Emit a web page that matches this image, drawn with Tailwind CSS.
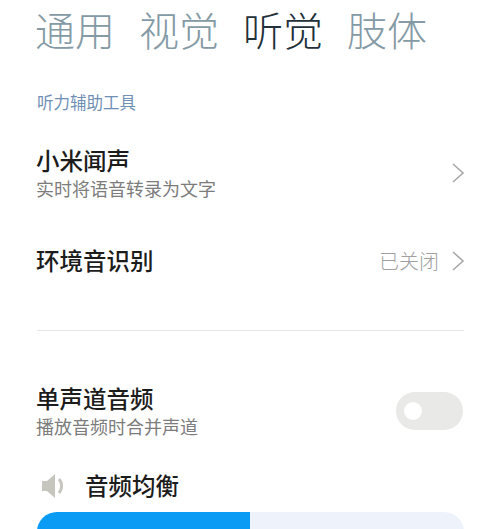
<!DOCTYPE html>
<html lang="zh-CN">
<head>
    <meta charset="UTF-8">
    <meta name="viewport" content="width=device-width, initial-scale=1.0">
    <title>听觉</title>
    <script src="https://cdn.jsdelivr.net/npm/@tailwindcss/browser@4"></script>
</head>
<body class="bg-white h-[529px] overflow-hidden font-['Noto_Sans_CJK_SC','Noto_Sans',sans-serif]">
    <div class="px-[36px] h-full flex flex-col">
        <!-- tabs -->
        <div class="flex gap-[24px] ml-[-1px] pt-[3px] h-[52px] text-[40px] leading-[52px] font-light text-[#849aa5]">
            <span>通用</span>
            <span>视觉</span>
            <span class="text-[#22303a]">听觉</span>
            <span>肢体</span>
        </div>

        <div class="mt-[40px] ml-[1px] text-[16.5px] leading-[20px] text-[#6f8fb5]">听力辅助工具</div>

        <!-- 小米闻声 -->
        <div class="mt-[33px] flex items-center justify-between">
            <div>
                <div class="text-[23.5px] leading-[30px] font-medium text-[#1c1c1c]">小米闻声</div>
                <div class="text-[18px] leading-[26px] text-[#7c7c7c]">实时将语音转录为文字</div>
            </div>
            <svg class="w-[14px] h-[22px] mr-[-1px]" viewBox="0 0 14 22" fill="none" stroke="#a8a8a8" stroke-width="1.6"><path d="M2 2l10 9-10 9"/></svg>
        </div>

        <!-- 环境音识别 -->
        <div class="mt-[43px] flex items-center justify-between h-[34px]">
            <div class="text-[23.5px] font-medium text-[#1c1c1c]">环境音识别</div>
            <div class="flex items-center gap-[12px] text-[20px] font-light text-[#a0a0a0]">
                <span>已关闭</span>
                <svg class="w-[14px] h-[22px] mr-[-1px]" viewBox="0 0 14 22" fill="none" stroke="#a8a8a8" stroke-width="1.6"><path d="M2 2l10 9-10 9"/></svg>
            </div>
        </div>

        <div class="mt-[52px] ml-[1px] border-t border-[#e6e6e6]"></div>

        <!-- 单声道音频 -->
        <div class="mt-[52px] flex items-center justify-between">
            <div>
                <div class="text-[23.5px] leading-[30px] font-medium text-[#1c1c1c]">单声道音频</div>
                <div class="text-[18px] leading-[26px] text-[#7c7c7c]">播放音频时合并声道</div>
            </div>
            <div class="w-[67px] h-[38px] rounded-full bg-[#e9e9e7] flex items-center pl-[8px] mr-[1px]">
                <div class="w-[18px] h-[18px] rounded-full bg-white"></div>
            </div>
        </div>

        <!-- 音频均衡 -->
        <div class="mt-[32px] flex items-center gap-[19px] h-[30px]">
            <svg class="w-[24px] h-[26px] ml-[6px] shrink-0" viewBox="0 0 24 26" fill="none"><path d="M0 8h5l8-7v24l-8-7H0z" fill="#c6c6be"/><path d="M17 6c3.500 4 3.500 10 0 14" stroke="#c6c6be" stroke-width="3"/></svg>
            <div class="text-[23.5px] font-medium text-[#1c1c1c]">音频均衡</div>
        </div>

        <!-- slider -->
        <div class="mt-[11px] ml-[1px] h-[40px] rounded-[20px] bg-[#eef2fb] overflow-hidden shrink-0">
            <div class="w-[213px] h-full bg-[#0a9bf5]"></div>
        </div>
    </div>
</body>
</html>
